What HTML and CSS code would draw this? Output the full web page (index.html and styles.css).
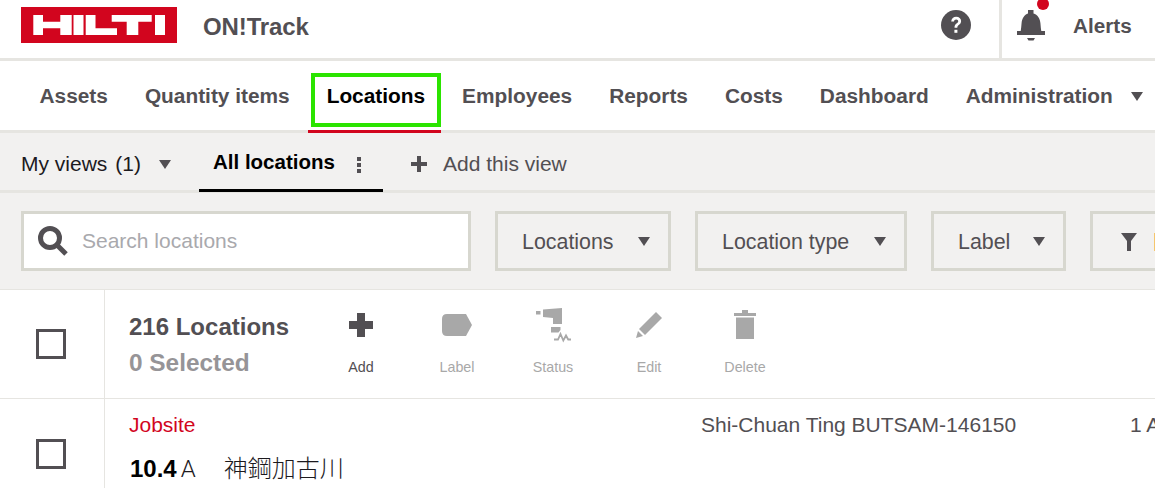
FILE: index.html
```html
<!DOCTYPE html>
<html lang="en">
<head>
<meta charset="utf-8">
<title>ON!Track</title>
<link rel="stylesheet" href="styles.css">
</head>
<body>
<header class="top">
  <svg class="logo" viewBox="0 0 156 36" aria-label="Hilti logo">
    <rect width="156" height="36" fill="#d2051e"/>
    <g fill="#fff">
      <path d="M12.300 8h9.700v6.700h17.300V8h11.400v20H39.300v-6.800H22V28h-9.700z"/>
      <rect x="52.500" y="8" width="10" height="20"/>
      <path d="M64.700 8h9.800v13.300h21.500V28H64.700z"/>
      <path d="M90.700 8h40v6.700h-13.400V28h-11.600V14.700h-15z"/>
      <rect x="134" y="8" width="10" height="20"/>
    </g>
  </svg>
  <div class="product">ON!Track</div>
  <div class="top-right">
    <svg class="help" viewBox="0 0 30 30"><circle cx="15" cy="15" r="15" fill="#524f53"/><path d="M10.200 11.600c.2-3 2.300-4.800 5-4.800 2.800 0 4.900 1.700 4.900 4.300 0 2-1 3-2.300 4-1 .8-1.500 1.300-1.500 2.700h-2.800c0-2.300.7-3.300 2-4.300 1-.8 1.700-1.400 1.700-2.300 0-1.100-.8-1.800-2-1.800-1.300 0-2.100.8-2.200 2.200z" fill="#fff"/><rect x="13.400" y="19.800" width="3" height="3" fill="#fff"/></svg>
    <div class="alerts">
      <span class="bell-wrap">
        <svg class="bell" viewBox="0 0 28 32"><path d="M11 0h5.500v3.400c4 1.300 6.500 4.700 6.900 9.600.3 3 .5 6 .9 8H28v4H0v-4h3.700c.4-2 .6-5 .9-8 .4-4.900 2.900-8.300 6.400-9.600z" fill="#524f53"/><path d="M10 28h8l-1.500 2.600h-5z" fill="#524f53"/></svg>
        <span class="dot"></span>
      </span>
      <span class="alerts-text">Alerts</span>
    </div>
  </div>
</header>

<nav class="nav">
  <a class="nav-item">Assets</a>
  <a class="nav-item">Quantity items</a>
  <a class="nav-item active"><span class="focus">Locations</span></a>
  <a class="nav-item">Employees</a>
  <a class="nav-item">Reports</a>
  <a class="nav-item">Costs</a>
  <a class="nav-item">Dashboard</a>
  <a class="nav-item">Administration</a>
  <span class="caret nav-caret"></span>
</nav>

<section class="views">
  <div class="my-views">My views<span class="view-count">(1)</span><span class="caret dim"></span></div>
  <div class="view-tab">All locations
    <svg class="kebab" viewBox="0 0 4 16"><rect y="0" width="4" height="4"/><rect y="6" width="4" height="4"/><rect y="12" width="4" height="4"/></svg>
  </div>
  <div class="add-view"><svg class="plus-small" viewBox="0 0 16 16"><path d="M6 0h4v6h6v4h-6v6H6v-6H0V6h6z"/></svg>Add this view</div>
</section>

<section class="filters">
  <div class="search">
    <svg class="search-icon" viewBox="0 0 30 30"><circle cx="12" cy="12" r="9.500" fill="none" stroke="#524f53" stroke-width="5"/><path d="M19 19l9 9" stroke="#524f53" stroke-width="5"/></svg>
    <span>Search locations</span>
  </div>
  <div class="select sel-loc">Locations<span class="caret"></span></div>
  <div class="select sel-type">Location type<span class="caret"></span></div>
  <div class="select sel-label">Label<span class="caret"></span></div>
  <div class="select sel-filter">
    <svg class="funnel" viewBox="0 0 16 18"><path d="M0 0h16L10 8v10H6V8z"/></svg>
    <span class="amber"></span>
  </div>
</section>

<section class="toolbar">
  <div class="check-cell"><span class="check"></span></div>
  <div class="tool-main">
    <div class="counts">
      <div class="count">216 Locations</div>
      <div class="selected">0 Selected</div>
    </div>
    <div class="actions">
      <div class="action">
        <span class="icon-box"><svg class="i-add" viewBox="0 0 24 24"><path d="M8 0h8v8h8v8h-8v8H8v-8H0V8h8z" fill="#524f53"/></svg></span>
        <span>Add</span>
      </div>
      <div class="action off">
        <span class="icon-box"><svg class="i-label" viewBox="0 0 30 22"><path d="M5 0h19l6 11-6 11H5q-5 0-5-5V5q0-5 5-5z" fill="#a8a8a8"/></svg></span>
        <span>Label</span>
      </div>
      <div class="action off">
        <span class="icon-box"><svg class="i-status" viewBox="0 -1 35 34"><g fill="#a8a8a8"><rect x="0" y="3" width="4.500" height="3.500"/><path d="M7 1.500 26 0v16h-9v-6L7 9z"/><path d="M15 19h9.500v3l-2 2.500H15z"/></g><path d="M18 31.500h4l2.500-5.500 2.800 6.500 2.700-5 2.200 4h2.800" fill="none" stroke="#a8a8a8" stroke-width="1.800"/></svg></span>
        <span>Status</span>
      </div>
      <div class="action off">
        <span class="icon-box"><svg class="i-edit" viewBox="0 0 26 26"><path d="M20 0l6 6L9 23l-6-6z" fill="#a8a8a8"/><path d="M0 26l2-7 5 5z" fill="#a8a8a8"/></svg></span>
        <span>Edit</span>
      </div>
      <div class="action off">
        <span class="icon-box"><svg class="i-delete" viewBox="0 0 22 29"><path d="M8 0h6v3h8v3H0V3h8zM2 7.500h18V29H2z" fill="#a8a8a8"/></svg></span>
        <span>Delete</span>
      </div>
    </div>
  </div>
</section>

<section class="row">
  <div class="check-cell"><span class="check"></span></div>
  <div class="row-main">
    <div class="row-cols">
      <span class="type">Jobsite</span>
      <span class="manager">Shi-Chuan Ting BUTSAM-146150</span>
      <span class="extra">1 A</span>
    </div>
    <div class="row-name"><b>10.4</b><span class="unit">A</span><span class="cjk">神鋼加古川</span></div>
  </div>
</section>
</body>
</html>
```

FILE: styles.css
```css
* { box-sizing: border-box; }
html, body { margin: 0; height: 488px; overflow: hidden; }
body { width: 1155px; font-family: "Liberation Sans", Arial, sans-serif; color: #524f53; background: #fff; }

.top { height: 61px; display: flex; align-items: flex-start; border-bottom: 3px solid #e6e5e1; padding-left: 21px; }
.logo { width: 156px; height: 36px; margin-top: 7px; flex: none; }
.product { margin: 13px 0 0 26px; font-size: 24px; line-height: 28px; font-weight: 700; letter-spacing: -.005em; }
.top-right { margin-left: auto; display: flex; height: 58px; }
.help { width: 30px; height: 30px; margin: 10px 28px 0 0; }
.alerts { width: 156px; height: 58px; border-left: 3px solid #e6e5e1; display: flex; padding-left: 15px; }
.bell-wrap { position: relative; width: 28px; height: 32px; margin-top: 10px; flex: none; }
.bell { display: block; width: 28px; height: 32px; }
.dot { position: absolute; left: 20px; top: -12px; width: 12px; height: 12px; border-radius: 50%; background: #d2051e; }
.alerts-text { margin: 14px 0 0 28px; font-size: 20.700px; line-height: 24px; font-weight: 700; }

.nav { height: 72px; display: flex; align-items: flex-start; border-bottom: 3px solid #e6e5e1; padding-left: 39.500px; gap: 37px; font-size: 20.850px; font-weight: 700; white-space: nowrap; }
.nav-item { padding-top: 23px; line-height: 24px; height: 69px; flex: none; }
.nav-item.active { position: relative; color: #000; }
.focus::before { content: ""; position: absolute; left: -16px; right: -16px; top: 12px; height: 46px; border: 4px solid #2be400; }
.nav-item.active::after { content: ""; position: absolute; left: -19px; right: -16px; top: 69px; height: 3px; background: #d2051e; }
.caret { display: inline-block; width: 0; height: 0; border-left: 6.500px solid transparent; border-right: 6.500px solid transparent; border-top: 9px solid #524f53; flex: none; }
.nav-caret { margin: 31px 0 0 -19px; }

.views { height: 60px; display: flex; align-items: flex-start; background: #f2f1f0; border-bottom: 3px solid #e6e5e1; padding-left: 21px; }
.my-views { margin-top: 18px; width: 178px; font-size: 21px; line-height: 26px; color: #1c1a1e; flex: none; display: flex; }
.view-count { margin-left: 8px; }
.caret.dim { margin: 9px 0 0 18px; }
.view-tab { position: relative; width: 184px; height: 59px; border-bottom: 3px solid #000; padding: 16px 0 0 14px; font-size: 20.500px; line-height: 26px; font-weight: 700; color: #000; flex: none; margin-right: 28px; }
.kebab { position: absolute; left: 158px; top: 24px; width: 4px; height: 16px; fill: #524f53; }
.add-view { margin-top: 18px; display: flex; align-items: center; font-size: 21px; line-height: 26px; }
.plus-small { width: 16px; height: 16px; margin-right: 16px; fill: #524f53; }

.filters { height: 97px; display: flex; align-items: flex-start; background: #f2f1f0; border-bottom: 1px solid #e6e5e1; padding: 18px 0 0 21px; overflow: hidden; gap: 24px; }
.search { width: 450px; height: 60px; background: #fff; border: 3px solid #d7d7cf; display: flex; align-items: center; padding-left: 14px; font-size: 21px; color: #a9a9ad; flex: none; }
.search-icon { width: 30px; height: 30px; margin-right: 14px; }
.select { height: 60px; border: 3px solid #d7d7cf; display: flex; align-items: center; justify-content: space-between; font-size: 21.400px; flex: none; padding: 2px 18px 0 24px; }
.select .caret { margin-top: -2px; }
.sel-loc { width: 176px; }
.sel-type { width: 212px; }
.sel-label { width: 135px; }
.sel-filter { width: 120px; justify-content: flex-start; padding-left: 28px; }
.funnel { width: 16px; height: 18px; fill: #524f53; }
.amber { width: 8px; height: 18px; margin-left: 17px; background: #f5c66e; }

.toolbar { height: 109px; display: flex; border-bottom: 1px solid #e6e5e1; }
.check-cell { width: 105px; border-right: 1px solid #e6e5e1; flex: none; padding: 39px 0 0 36px; }
.check { display: block; width: 30px; height: 30px; border: 3px solid #524f53; background: #fff; }
.tool-main { display: flex; padding-left: 24px; }
.counts { width: 208px; padding-top: 19px; font-size: 24px; line-height: 36px; font-weight: 700; flex: none; }
.selected { color: #969497; font-size: 24.400px; }
.actions { display: flex; padding-top: 17px; }
.action { width: 96px; margin-left: -24px; margin-right: 24px; display: flex; flex-direction: column; align-items: center; font-size: 14.300px; line-height: 18px; color: #524f53; }
.action.off { color: #a8a8a8; }
.icon-box { height: 34px; margin-bottom: 17px; display: flex; align-items: center; justify-content: center; }
.i-add { width: 24px; height: 24px; margin-top: 1px; }
.i-label { width: 30px; height: 22px; margin-top: 1px; }
.i-status { width: 35px; height: 34px; overflow: visible; }
.i-edit { width: 26px; height: 26px; margin-top: 1px; }
.i-delete { width: 22px; height: 29px; margin-top: 1px; }

.row { height: 90px; display: flex; }
.row .check-cell { padding-top: 40px; }
.row-main { padding: 13px 0 0 24px; flex: 1; min-width: 0; }
.row-cols { position: relative; font-size: 21px; line-height: 26px; }
.type { color: #d2051e; }
.manager { position: absolute; left: 572px; top: 0; white-space: nowrap; }
.extra { position: absolute; left: 1001px; top: 0; white-space: nowrap; }
.row-name { margin-top: 15px; font-size: 24px; line-height: 32px; color: #000; display: flex; padding-left: 1px; }
.unit { margin-left: 4px; font-family: Roboto, sans-serif; font-weight: 300; font-size: 24px; color: #1c1a1e; }
.cjk { margin-left: 28px; font-family: "Liberation Sans", "Noto Sans CJK TC", sans-serif; font-size: 24px; font-weight: 300; color: #1c1a1e; }
```
